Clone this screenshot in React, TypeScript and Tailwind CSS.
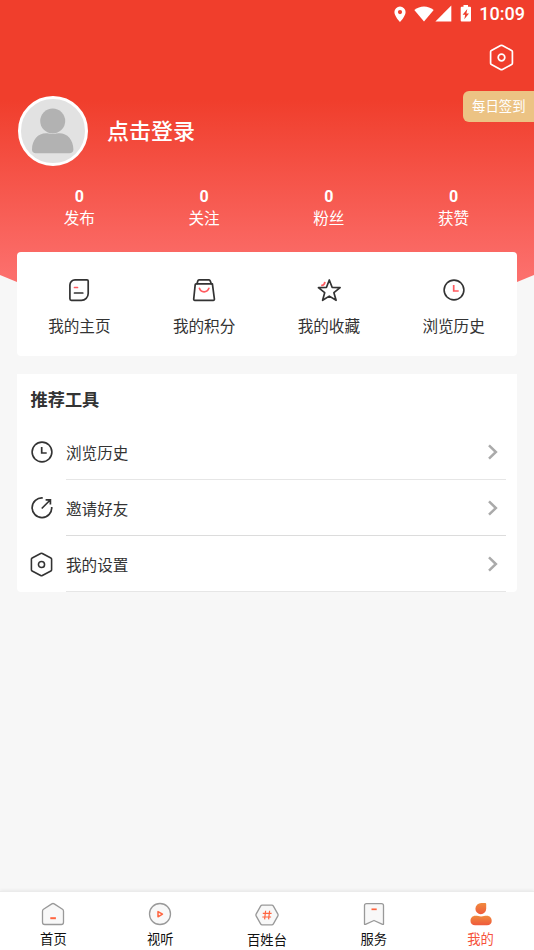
import type { ReactNode } from "react";

const stats = [
  { label: "发布", value: 0 },
  { label: "关注", value: 0 },
  { label: "粉丝", value: 0 },
  { label: "获赞", value: 0 },
];

const shortcuts: { label: string; icon: ReactNode }[] = [
  { label: "我的主页", icon: <PageIcon /> },
  { label: "我的积分", icon: <BagIcon /> },
  { label: "我的收藏", icon: <StarIcon /> },
  { label: "浏览历史", icon: <ClockIcon hands="#ff5a5f" /> },
];

const tools: { label: string; icon: ReactNode; line: string }[] = [
  { label: "浏览历史", icon: <ClockIcon hands="#333" />, line: "border-[#e6e6e6]" },
  { label: "邀请好友", icon: <InviteIcon />, line: "border-[#dcdcdc]" },
  { label: "我的设置", icon: <SettingIcon size={25} />, line: "border-[#e6e6e6]" },
];

const tabs: { label: string; icon: ReactNode; active?: boolean; low?: boolean }[] = [
  { label: "首页", icon: <HomeIcon /> },
  { label: "视听", icon: <PlayIcon /> },
  { label: "百姓台", icon: <HashIcon />, low: true },
  { label: "服务", icon: <ServiceIcon /> },
  { label: "我的", icon: <MineIcon />, active: true },
];

export default function App() {
  return (
    <div className="flex h-[950px] w-full flex-col overflow-hidden bg-[#f7f7f7] font-['Roboto','Noto_Sans_CJK_SC',sans-serif] text-[#333]">
      <header className="h-[300px] shrink-0 bg-[linear-gradient(180deg,#f03e2c_0px,#f03e2c_100px,#fc6f6c_275px)] text-white [clip-path:polygon(0_0,100%_0,100%_275px,517px_282px,480px_294px,54px_294px,17px_282px,0_275px)]">
        <StatusBar />

        <div className="flex h-[64px] items-start justify-end pr-[19px] pt-[17px]">
          <SettingIcon size={27} />
        </div>

        <div className="flex h-[78px] items-start">
          <div className="ml-[18px] mt-[5px] size-[70px] overflow-hidden rounded-full border-[3px] border-white bg-[#e2e2e2]">
            <Avatar />
          </div>
          <h1 className="ml-[19px] mt-[24px] text-[22px] font-medium leading-[34px]">点击登录</h1>
          <span className="ml-auto flex h-[31px] w-[71px] items-center rounded-l-[6px] bg-[#ecc384] pl-[9px] pt-px text-[13.4px] leading-none">
            每日签到
          </span>
        </div>

        <div className="ml-[17px] mr-[18px] mt-[18px] grid grid-cols-4">
          {stats.map((s) => (
            <div key={s.label} className="flex flex-col items-center">
              <span className="text-[16px] font-bold leading-[20px]">{s.value}</span>
              <span className="mt-px text-[15.6px] leading-[22px]">{s.label}</span>
            </div>
          ))}
        </div>
      </header>

      <main className="relative -mt-[48px] flex-1 px-[17px]">
        <section className="grid h-[104px] grid-cols-4 rounded-[4px] bg-white pr-px pt-[25px]">
          {shortcuts.map((s) => (
            <div key={s.label} className="flex flex-col items-center">
              {s.icon}
              <span className="mt-[13px] text-[15.6px] leading-[22px]">{s.label}</span>
            </div>
          ))}
        </section>

        <section className="mt-[18px] h-[218px] rounded-b-[4px] bg-white pt-[13px]">
          <h2 className="pl-[13.5px] text-[17.2px] font-bold leading-[26px]">推荐工具</h2>
          <ul className="mt-[11px] pl-[11px]">
            {tools.map((t) => (
              <li key={t.label} className="flex h-14 items-stretch">
                <span className="flex w-[38px] items-center">
                  <span className="flex w-[27px] justify-center">{t.icon}</span>
                </span>
                <span className={`mr-[11px] flex flex-1 items-center justify-between border-b pr-[8px] ${t.line}`}>
                  <span className="pt-[4px] text-[15.6px] leading-[22px]">{t.label}</span>
                  <Chevron />
                </span>
              </li>
            ))}
          </ul>
        </section>
      </main>

      <nav className="grid h-[59px] shrink-0 grid-cols-5 border-t border-[#ebebeb] bg-white text-[13.3px] text-[#111] shadow-[0_-1px_3px_rgba(0,0,0,0.06)]">
        {tabs.map((t) => (
          <div key={t.label} className={`flex flex-col items-center ${t.low ? "pt-[10px]" : "pt-[9px]"}`}>
            {t.icon}
            <span className={`mt-[3px] leading-[20px] ${t.active ? "text-[#f6533c]" : ""}`}>{t.label}</span>
          </div>
        ))}
      </nav>
    </div>
  );
}

function StatusBar() {
  return (
    <div className="flex h-[27px] items-center justify-end pr-[9px]">
      <svg className="mr-[7px]" width="14" height="18" viewBox="0 0 14 18" fill="#fff">
        <path fillRule="evenodd" d="M7 1.500a5.600 5.600 0 0 0-5.600 5.600C1.400 11.300 7 17.200 7 17.200s5.600-5.900 5.600-10.100A5.600 5.600 0 0 0 7 1.500ZM7 5a2.100 2.100 0 1 1 0 4.200A2.100 2.100 0 0 1 7 5Z" />
      </svg>
      <svg width="20" height="18" viewBox="0 0 20 18" fill="#fff">
        <path d="M0.300 5C6 .2 14 .2 19.700 5L10 16.500Z" />
      </svg>
      <svg className="ml-[1px]" width="17" height="18" viewBox="0 0 17 18" fill="#fff">
        <path d="M16.300.6V16.500H.4Z" />
      </svg>
      <svg className="ml-[8px] mr-[7px]" width="12" height="18" viewBox="0 0 12 18">
        <path fill="#fff" d="M3.500 0h4.500v1.700h2a1 1 0 0 1 1 1V15.500a1 1 0 0 1-1 1H1.700a1 1 0 0 1-1-1V2.700a1 1 0 0 1 1-1h1.800Z" />
        <path fill="#f03e2c" d="M7.300 4 2.600 9.800H5.200L4.300 14.300 9 8.500H6.400Z" />
      </svg>
      <span className="text-[18px] font-medium leading-[27px]">10:09</span>
    </div>
  );
}

function Avatar() {
  return (
    <svg width="64" height="64" viewBox="0 0 64 64" fill="#b2b2b2">
      <circle cx="31.700" cy="22" r="12.500" />
      <path d="M11 50.500C11 41 17 34.300 25 34.300c4 0 4 .8 6.700.8s2.700-.8 6.700-.8c8 0 14 6.700 14 16.200 0 2.600-1.600 3.700-4 3.700H15c-2.400 0-4-1.100-4-3.700Z" />
    </svg>
  );
}

function SettingIcon({ size }: { size: number }) {
  return (
    <svg width={size} height={size} viewBox="0 0 27 27" fill="none" stroke="currentColor" strokeWidth="1.700" strokeLinejoin="round">
      <path d="M12.600 1.600q.9-.5 1.800 0l9.200 4.900q.8.400.8 1.300v11.400q0 .9-.8 1.300l-9.200 4.900q-.9.500-1.800 0l-9.200-4.900q-.8-.4-.8-1.300V7.800q0-.9.8-1.300Z" />
      <circle cx="13.500" cy="13.500" r="3.300" />
    </svg>
  );
}

function PageIcon() {
  return (
    <svg width="26" height="26" viewBox="0 0 26 26" fill="none" stroke="#333" strokeWidth="1.700" strokeLinecap="round">
      <path d="M9 2.900h12a1.200 1.200 0 0 1 1.200 1.200v12.400a6.800 6.800 0 0 1-6.800 6.800h-10a1.500 1.500 0 0 1-1.500-1.500V8A5.100 5.100 0 0 1 9 2.900Z" />
      <path d="M8.500 10.500h3" stroke="#ff5a5f" />
      <path d="M8.500 16h8.300" />
    </svg>
  );
}

function BagIcon() {
  return (
    <svg width="26" height="26" viewBox="0 0 26 26" fill="none" stroke="#333" strokeWidth="1.700" strokeLinejoin="round" strokeLinecap="round">
      <path d="M5 6.900h16.400l2 15.200q.1 1.200-1.100 1.200H3.800q-1.200 0-1.100-1.200L4.200 7.700q.1-.8.800-.8Z" />
      <path d="M6 6.700l.8-2.800q.3-1 1.200-1h10q.9 0 1.200 1l1.100 2.800" />
      <path d="M8.400 11.300c1.500 4.700 7.800 4.700 9.500 0" stroke="#ff5a5f" />
    </svg>
  );
}

function StarIcon() {
  return (
    <svg width="26" height="26" viewBox="0 0 26 26" fill="none" stroke="#333" strokeWidth="1.700" strokeLinejoin="round">
      <path d="M13.300 3l2.800 7.300 8 .4-6.200 5 2.200 7.600-6.800-4.200-6.700 4.200 2.100-7.600-6.300-5 8.100-.4Z" />
      <path d="M5.200 8.300q3.200.5 3.700-3.400" stroke="#ff5a5f" strokeWidth="1.800" />
    </svg>
  );
}

function ClockIcon({ hands }: { hands: string }) {
  return (
    <svg width="26" height="26" viewBox="0 0 26 26" fill="none" stroke="#333" strokeWidth="1.600">
      <circle cx="13" cy="13" r="9.900" />
      <path d="M12.700 8v6h5" stroke={hands} strokeWidth="1.700" />
    </svg>
  );
}

function InviteIcon() {
  return (
    <svg width="26" height="26" viewBox="0 0 26 26" fill="none" stroke="#333" strokeWidth="1.700">
      <path d="M13.800 3A9.800 9.800 0 1 0 22.700 12" />
      <path d="M12.700 13.500 21.200 5M16.600 4.800h4.800v4.700" />
    </svg>
  );
}

function Chevron() {
  return (
    <svg width="10" height="18" viewBox="0 0 10 18" fill="none" stroke="#aaa" strokeWidth="2.500">
      <path d="M1 2.300 7.900 9 1 15.700" />
    </svg>
  );
}

function HomeIcon() {
  return (
    <svg width="26" height="26" viewBox="0 0 26 26" fill="#f8f8f8" stroke="#999" strokeWidth="1.300" strokeLinejoin="round">
      <path d="M11.800 2.900q1.200-.8 2.400 0l8.300 5.400q1 .7 1 2v11q0 2.200-2.200 2.200H4.700q-2.200 0-2.200-2.200v-11q0-1.300 1-2Z" />
      <path d="M10.300 17.200h5.600" stroke="#ff6540" strokeWidth="2" />
    </svg>
  );
}

function PlayIcon() {
  return (
    <svg width="26" height="26" viewBox="0 0 26 26" fill="#f8f8f8" stroke="#999" strokeWidth="1.300">
      <circle cx="13" cy="13" r="10.500" />
      <path d="M11 10.600v5.200l4.500-2.600Z" stroke="#ff6540" strokeWidth="1.500" strokeLinejoin="round" />
    </svg>
  );
}

function HashIcon() {
  return (
    <svg width="26" height="26" viewBox="0 0 26 26" fill="#f8f8f8" stroke="#999" strokeWidth="1.300" strokeLinejoin="round">
      <path d="M8.300 3.200h9.400q1.200 0 1.700.9l4.500 8q.5.900 0 1.800l-4.500 8q-.5.900-1.700.9H8.300q-1.200 0-1.700-.9l-4.500-8q-.5-.9 0-1.800l4.500-8q.5-.9 1.700-.9Z" />
      <path d="M11.600 8.800l-1 8.600M15.600 8.800l-1 8.600M8.800 11.300h8.800M8.300 15h8.800" stroke="#ff6540" strokeWidth="1.200" />
    </svg>
  );
}

function ServiceIcon() {
  return (
    <svg width="26" height="26" viewBox="0 0 26 26" fill="#f8f8f8" stroke="#999" strokeWidth="1.300" strokeLinejoin="round">
      <path d="M5.500 2.600h15q2 0 2 2v18.500q-.3.600-1 .2L13 19.500l-8.500 3.800q-.7.400-1-.2V4.600q0-2 2-2Z" />
      <path d="M10.500 8.300h5.200" stroke="#ff6540" strokeWidth="1.700" />
    </svg>
  );
}

function MineIcon() {
  return (
    <svg width="26" height="26" viewBox="0 0 26 26">
      <defs>
        <linearGradient id="mine-head" x1="0" y1="0" x2="0" y2="1">
          <stop offset="0" stopColor="#f08a3e" />
          <stop offset="1" stopColor="#ef5a3c" />
        </linearGradient>
      </defs>
      <path fill="url(#mine-head)" d="M13.800 2h3.400q1 0 1 1v4.800a5.400 5.400 0 1 1-10.800 0A5.800 5.800 0 0 1 13.800 2Z" />
      <path fill="url(#mine-head)" d="M7.400 14.800c2.300 0 3.300.6 5.700.6s3.400-.6 5.700-.6c3 0 4.900 2.200 4.900 5.200 0 2.600-1.700 4.200-4.700 4.200H7.200c-3 0-4.700-1.600-4.700-4.200 0-3 1.900-5.200 4.900-5.200Z" />
    </svg>
  );
}
